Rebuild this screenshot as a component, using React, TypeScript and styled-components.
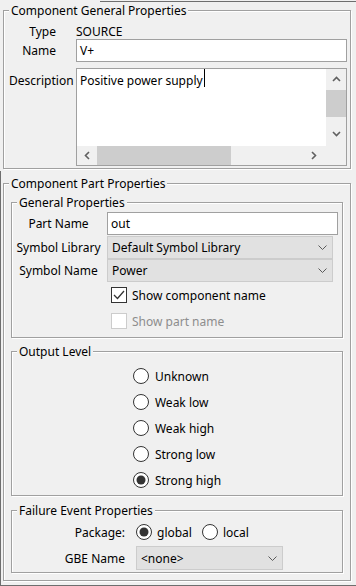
import React from "react";
import styled, { createGlobalStyle } from "styled-components";

const GlobalStyle = createGlobalStyle`
  html, body {
    margin: 0;
    padding: 0;
    background: #f0f0f0;
  }
  body {
    font-family: "Noto Sans", "DejaVu Sans", sans-serif;
    font-size: 12px;
    color: #000;
  }
  * {
    box-sizing: border-box;
  }
`;

const Screen = styled.div`
  width: 356px;
  height: 586px;
  overflow: hidden;
  display: flex;
  flex-direction: column;
  background: #f0f0f0;
`;

const TopPane = styled.div`
  height: 171px;
  flex: none;
  display: flex;
  flex-direction: column;
  padding: 0 5px 0 3px;
`;

const TopRule = styled.div`
  height: 1px;
  margin: 1px -5px 8px 97px;
  background: #6e6e6e;
`;

const BottomPane = styled.div`
  height: 415px;
  flex: none;
  display: flex;
  flex-direction: column;
  padding: 12px 5px 4px 2px;
  border-left: 1px solid #6e6e6e;
  border-bottom: 1px solid #6e6e6e;
`;

/* etched titled border, like a swing TitledBorder */
const Group = styled.div<{ $mt?: number }>`
  display: flex;
  flex-direction: column;
  margin-top: ${({ $mt }) => $mt ?? 0}px;
  border: 1px solid #a0a0a0;
  box-shadow: 1px 1px 0 #fff, inset 1px 1px 0 #fff;
`;

const GroupTitle = styled.div`
  align-self: flex-start;
  margin: -8px 0 0 5px;
  padding: 0 2px;
  background: #f0f0f0;
  line-height: 15px;
  white-space: nowrap;
`;

const GroupBody = styled.div<{ $pad: string }>`
  display: flex;
  flex-direction: column;
  padding: ${({ $pad }) => $pad};
`;

const FormRow = styled.div<{ $h: number; $mt?: number; $top?: boolean }>`
  display: grid;
  grid-template-columns: 62px 1fr;
  column-gap: 5px;
  height: ${({ $h }) => $h}px;
  margin-top: ${({ $mt }) => $mt ?? 0}px;
  align-items: ${({ $top }) => ($top ? "start" : "center")};
`;

const FieldLabel = styled.div<{ $align?: string; $pr?: number; $pt?: number }>`
  text-align: ${({ $align }) => $align ?? "center"};
  padding-right: ${({ $pr }) => $pr ?? 0}px;
  padding-top: ${({ $pt }) => $pt ?? 0}px;
  line-height: 15px;
  white-space: nowrap;
`;

const Value = styled.div`
  line-height: 15px;
`;

const TextInput = styled.div<{ $h: number }>`
  display: flex;
  align-items: center;
  height: ${({ $h }) => $h}px;
  padding-left: 3px;
  background: #fff;
  border: 1px solid #a0a0a0;
  line-height: 15px;
`;

const TextArea = styled.div`
  height: 98px;
  display: grid;
  grid-template-columns: 1fr 20px;
  grid-template-rows: 1fr 19px;
  border: 1px solid #a0a0a0;
  background: #fff;
`;

const TextBody = styled.div`
  padding: 4px 3px;
  line-height: 15px;
  white-space: nowrap;
  overflow: hidden;
`;

const Caret = styled.span`
  display: inline-block;
  width: 1px;
  height: 18px;
  margin: -4px 0 0 1px;
  vertical-align: top;
  background: #000;
`;

const VBar = styled.div`
  display: flex;
  flex-direction: column;
  background: #f0f0f0;
`;

const HBar = styled.div`
  display: flex;
  background: #f0f0f0;
`;

const ArrowCell = styled.div<{ $w?: number; $h?: number; $end?: number }>`
  flex: none;
  display: flex;
  align-items: center;
  justify-content: center;
  width: ${({ $w }) => ($w ? `${$w}px` : "auto")};
  height: ${({ $h }) => ($h ? `${$h}px` : "auto")};
  margin: ${({ $end, $w }) => ($end ? ($w ? `0 ${$end}px 0 0` : `0 0 ${$end}px 0`) : "0")};
`;

const Thumb = styled.div<{ $w?: number; $h?: number }>`
  flex: none;
  background: #cdcdcd;
  width: ${({ $w }) => ($w ? `${$w}px` : "auto")};
  height: ${({ $h }) => ($h ? `${$h}px` : "auto")};
  margin: ${({ $w }) => ($w ? "0 0 0 1px" : "1px 0 0 0")};
`;

const Spacer = styled.div`
  flex: 1;
`;

const Corner = styled.div`
  background: #f0f0f0;
`;

const PartGrid = styled.div`
  display: grid;
  grid-template-columns: 85px 1fr;
  grid-template-rows: 23px 24px 23px 26px 26px;
  column-gap: 6px;
  align-items: center;
  margin-top: 2px;
  padding: 0 4px 3px 4px;
`;

const Combo = styled.div<{ $w?: number; $h: number; $self?: string }>`
  display: flex;
  align-items: center;
  justify-content: space-between;
  align-self: ${({ $self }) => $self ?? "center"};
  width: ${({ $w }) => ($w ? `${$w}px` : "calc(100% - 5px)")};
  height: ${({ $h }) => $h}px;
  padding: 0 5px 0 4px;
  background: #e1e1e1;
  border: 1px solid #cccccc;
  line-height: 15px;
  white-space: nowrap;
`;

const CheckRow = styled.label<{ $disabled?: boolean }>`
  grid-column: 2;
  display: flex;
  align-items: center;
  gap: 5px;
  height: 26px;
  padding-left: 4px;
  line-height: 15px;
  color: ${({ $disabled }) => ($disabled ? "#8d8d8d" : "#000")};
`;

const Box = styled.span<{ $disabled?: boolean }>`
  flex: none;
  display: flex;
  align-items: center;
  justify-content: center;
  width: 16px;
  height: 16px;
  background: #fff;
  border: 1px solid ${({ $disabled }) => ($disabled ? "#cccccc" : "#333")};
`;

const RadioList = styled.div`
  display: grid;
  justify-content: center;
  grid-auto-rows: 26px;
  margin-top: 4px;
  padding: 0 4px 2px 4px;
`;

const RadioRow = styled.label<{ $mr?: number }>`
  display: flex;
  align-items: center;
  gap: 6px;
  line-height: 15px;
  margin-right: ${({ $mr }) => $mr ?? 0}px;
`;

const FailureGrid = styled.div`
  display: grid;
  grid-template-columns: 109px 147px;
  grid-template-rows: 28px 24px;
  column-gap: 11px;
  align-items: center;
  padding: 0 4px 2px 4px;
`;

const RadioGroup = styled.div`
  display: flex;
  align-items: center;
`;

const Chevron = () => (
  <svg width="9" height="5" viewBox="0 0 9 5">
    <polyline points="0.5,0.5 4.5,4.5 8.5,0.5" fill="none" stroke="#5a5a5a" strokeWidth="1" />
  </svg>
);

const ScrollArrow = ({ dir }: { dir: "up" | "down" | "left" | "right" }) => {
  const pts = {
    up: "1,5 4.5,1.5 8,5",
    down: "1,1 4.5,4.5 8,1",
    left: "5,1 1.5,4.5 5,8",
    right: "1,1 4.5,4.5 1,8",
  }[dir];
  const vertical = dir === "up" || dir === "down";
  return (
    <svg width={vertical ? 9 : 6} height={vertical ? 6 : 9} viewBox={vertical ? "0 0 9 6" : "0 0 6 9"}>
      <polyline points={pts} fill="none" stroke="#606060" strokeWidth="1.6" />
    </svg>
  );
};

const Radio = ({ on }: { on?: boolean }) => (
  <svg width="16" height="16" viewBox="0 0 16 16" style={{ flex: "none" }}>
    <circle cx="8" cy="8" r="7.5" fill="#fff" stroke="#333" strokeWidth="1" />
    {on && <circle cx="8" cy="8" r="4.5" fill="#333" />}
  </svg>
);

const levels = ["Unknown", "Weak low", "Weak high", "Strong low", "Strong high"];

export default function App() {
  return (
    <>
      <GlobalStyle />
      <Screen>
        <TopPane>
          <TopRule />
          <Group>
            <GroupTitle>Component General Properties</GroupTitle>
            <GroupBody $pad="6px 3px 2px 5px">
              <FormRow $h={15}>
                <FieldLabel $align="right" $pr={15}>Type</FieldLabel>
                <Value>SOURCE</Value>
              </FormRow>
              <FormRow $h={23}>
                <FieldLabel $align="right" $pr={15}>Name</FieldLabel>
                <TextInput $h={23}>V+</TextInput>
              </FormRow>
              <FormRow $h={98} $mt={6} $top>
                <FieldLabel $pt={5}>Description</FieldLabel>
                <TextArea>
                  <TextBody>
                    Positive power supply<Caret />
                  </TextBody>
                  <VBar>
                    <ArrowCell $h={20}>
                      <ScrollArrow dir="up" />
                    </ArrowCell>
                    <Thumb $h={27} />
                    <Spacer />
                    <ArrowCell $h={20} $end={2}>
                      <ScrollArrow dir="down" />
                    </ArrowCell>
                  </VBar>
                  <HBar>
                    <ArrowCell $w={19}>
                      <ScrollArrow dir="left" />
                    </ArrowCell>
                    <Thumb $w={134} />
                    <Spacer />
                    <ArrowCell $w={20} $end={2}>
                      <ScrollArrow dir="right" />
                    </ArrowCell>
                  </HBar>
                  <Corner />
                </TextArea>
              </FormRow>
            </GroupBody>
          </Group>
        </TopPane>

        <BottomPane>
          <Group>
            <GroupTitle>Component Part Properties</GroupTitle>
            <GroupBody $pad="0 7px 7px 7px">
              <Group $mt={11}>
                <GroupTitle>General Properties</GroupTitle>
                <PartGrid>
                  <FieldLabel>Part Name</FieldLabel>
                  <TextInput $h={23}>out</TextInput>
                  <FieldLabel>Symbol Library</FieldLabel>
                  <Combo $h={23} $self="end">
                    Default Symbol Library
                    <Chevron />
                  </Combo>
                  <FieldLabel>Symbol Name</FieldLabel>
                  <Combo $h={23}>
                    Power
                    <Chevron />
                  </Combo>
                  <CheckRow>
                    <Box>
                      <svg width="14" height="14" viewBox="0 0 14 14">
                        <polyline points="2,7 5.5,10.5 12,3" fill="none" stroke="#333" strokeWidth="1.3" />
                      </svg>
                    </Box>
                    Show component name
                  </CheckRow>
                  <CheckRow $disabled>
                    <Box $disabled />
                    Show part name
                  </CheckRow>
                </PartGrid>
              </Group>

              <Group $mt={13}>
                <GroupTitle>Output Level</GroupTitle>
                <RadioList>
                  {levels.map((l) => (
                    <RadioRow key={l}>
                      <Radio on={l === "Strong high"} />
                      {l}
                    </RadioRow>
                  ))}
                </RadioList>
              </Group>

              <Group $mt={14}>
                <GroupTitle>Failure Event Properties</GroupTitle>
                <FailureGrid>
                  <FieldLabel $align="right">Package:</FieldLabel>
                  <RadioGroup>
                    <RadioRow $mr={10} style={{ gap: 5 }}>
                      <Radio on />
                      global
                    </RadioRow>
                    <RadioRow style={{ gap: 5 }}>
                      <Radio />
                      local
                    </RadioRow>
                  </RadioGroup>
                  <FieldLabel $align="right">GBE Name</FieldLabel>
                  <Combo $w={147} $h={24}>
                    &lt;none&gt;
                    <Chevron />
                  </Combo>
                </FailureGrid>
              </Group>
            </GroupBody>
          </Group>
        </BottomPane>
      </Screen>
    </>
  );
}
